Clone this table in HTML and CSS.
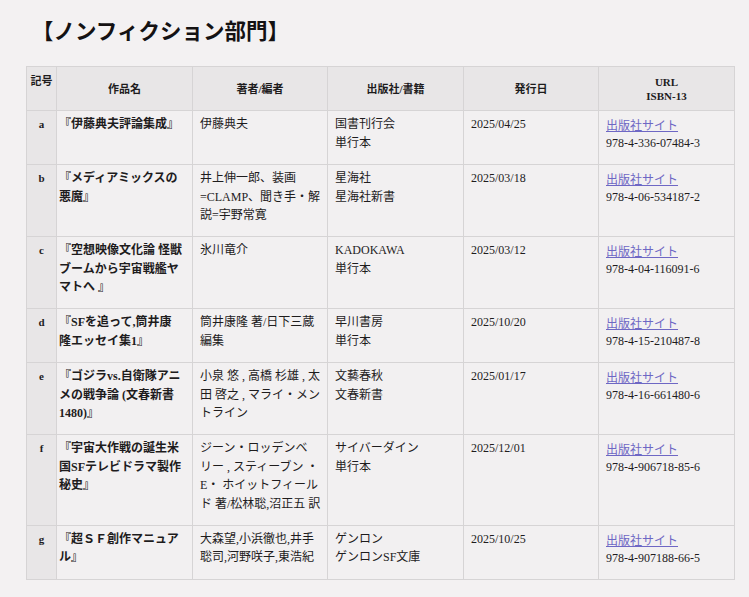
FILE: index.html
```html
<!DOCTYPE html>
<html lang="ja">
<head>
<meta charset="utf-8">
<link rel="stylesheet" href="styles.css">
</head>
<body>
<h2 class="title">【ノンフィクション部門】</h2>
<table class="works">
  <colgroup>
    <col class="c-mark"><col class="c-title"><col class="c-author"><col class="c-pub"><col class="c-date"><col class="c-url">
  </colgroup>
  <thead>
    <tr>
      <th class="mark">記号</th>
      <th>作品名</th>
      <th>著者/編者</th>
      <th>出版社/書籍</th>
      <th>発行日</th>
      <th>URL<br>ISBN-13</th>
    </tr>
  </thead>
  <tbody>
    <tr>
      <th class="mark">a</th>
      <td class="name">『伊藤典夫評論集成』</td>
      <td>伊藤典夫</td>
      <td>国書刊行会<br>単行本</td>
      <td>2025/04/25</td>
      <td><a class="link" href="#">出版社サイト</a><span class="isbn">978-4-336-07484-3</span></td>
    </tr>
    <tr>
      <th class="mark">b</th>
      <td class="name">『メディアミックスの<br>悪魔』</td>
      <td>井上伸一郎、装画<br>=CLAMP、聞き手・解<br>説=宇野常寛</td>
      <td>星海社<br>星海社新書</td>
      <td>2025/03/18</td>
      <td><a class="link" href="#">出版社サイト</a><span class="isbn">978-4-06-534187-2</span></td>
    </tr>
    <tr>
      <th class="mark">c</th>
      <td class="name">『空想映像文化論 怪獣<br>ブームから宇宙戦艦ヤ<br>マトへ 』</td>
      <td>氷川竜介</td>
      <td>KADOKAWA<br>単行本</td>
      <td>2025/03/12</td>
      <td><a class="link" href="#">出版社サイト</a><span class="isbn">978-4-04-116091-6</span></td>
    </tr>
    <tr>
      <th class="mark">d</th>
      <td class="name">『SFを追って,筒井康<br>隆エッセイ集1』</td>
      <td>筒井康隆 著/日下三蔵<br>編集</td>
      <td>早川書房<br>単行本</td>
      <td>2025/10/20</td>
      <td><a class="link" href="#">出版社サイト</a><span class="isbn">978-4-15-210487-8</span></td>
    </tr>
    <tr>
      <th class="mark">e</th>
      <td class="name">『ゴジラvs.自衛隊アニ<br>メの戦争論 (文春新書<br>1480)』</td>
      <td>小泉 悠 , 高橋 杉雄 , 太<br>田 啓之 , マライ・メン<br>トライン</td>
      <td>文藝春秋<br>文春新書</td>
      <td>2025/01/17</td>
      <td><a class="link" href="#">出版社サイト</a><span class="isbn">978-4-16-661480-6</span></td>
    </tr>
    <tr>
      <th class="mark">f</th>
      <td class="name">『宇宙大作戦の誕生米<br>国SFテレビドラマ製作<br>秘史』</td>
      <td>ジーン・ロッデンベ<br>リー , スティーブン ・<br>E・ ホイットフィール<br>ド 著/松林聡,沼正五 訳</td>
      <td>サイバーダイン<br>単行本</td>
      <td>2025/12/01</td>
      <td><a class="link" href="#">出版社サイト</a><span class="isbn">978-4-906718-85-6</span></td>
    </tr>
    <tr>
      <th class="mark">g</th>
      <td class="name">『超ＳＦ創作マニュア<br>ル』</td>
      <td>大森望,小浜徹也,井手<br>聡司,河野咲子,東浩紀</td>
      <td>ゲンロン<br>ゲンロンSF文庫</td>
      <td>2025/10/25</td>
      <td><a class="link" href="#">出版社サイト</a><span class="isbn">978-4-907188-66-5</span></td>
    </tr>
  </tbody>
</table>
</body>
</html>
```

FILE: styles.css
```css
html, body {
  background: #f3f1f2;
}
body {
  margin: 0;
  padding: 19px 15px 18px 26px;
  font-family: "Liberation Serif", "Noto Sans CJK JP", serif;
  color: #1e1c1d;
}
.title {
  margin: 0 0 21px 0;
  padding-left: 6px;
  font-size: 21.5px;
  line-height: 26px;
  font-weight: bold;
  color: #141213;
}
.works {
  width: 708px;
  border-collapse: collapse;
  table-layout: fixed;
  background: #f2f0f1;
  border: 1px solid #d6d4d5;
}
.c-mark { width: 30px; }
.c-title { width: 136px; }
.c-author { width: 135px; }
.c-pub { width: 136px; }
.c-date { width: 135px; }
.c-url { width: 136px; }
.works th,
.works td {
  border: 1px solid #d6d4d5;
  padding: 4px 4px 11.5px 7px;
  font-size: 12px;
  line-height: 18.5px;
  text-align: left;
  vertical-align: top;
  white-space: nowrap;
}
.works td.name {
  font-weight: bold;
  padding-left: 2px;
}
.works thead th {
  background: #e8e6e7;
  font-size: 11px;
  line-height: 14px;
  font-weight: bold;
  text-align: center;
  vertical-align: middle;
  padding: 8px 4px 7px;
}
.works thead th.mark {
  vertical-align: top;
  padding: 7px 2px;
}
.works tbody th.mark {
  background: #e8e6e7;
  text-align: center;
  font-weight: bold;
  font-size: 11px;
  padding: 4px 2px;
}
.link {
  display: block;
  margin-top: 3px;
  color: #6e67c4;
  text-decoration: underline;
  line-height: 16px;
}
.isbn {
  display: block;
}
```
